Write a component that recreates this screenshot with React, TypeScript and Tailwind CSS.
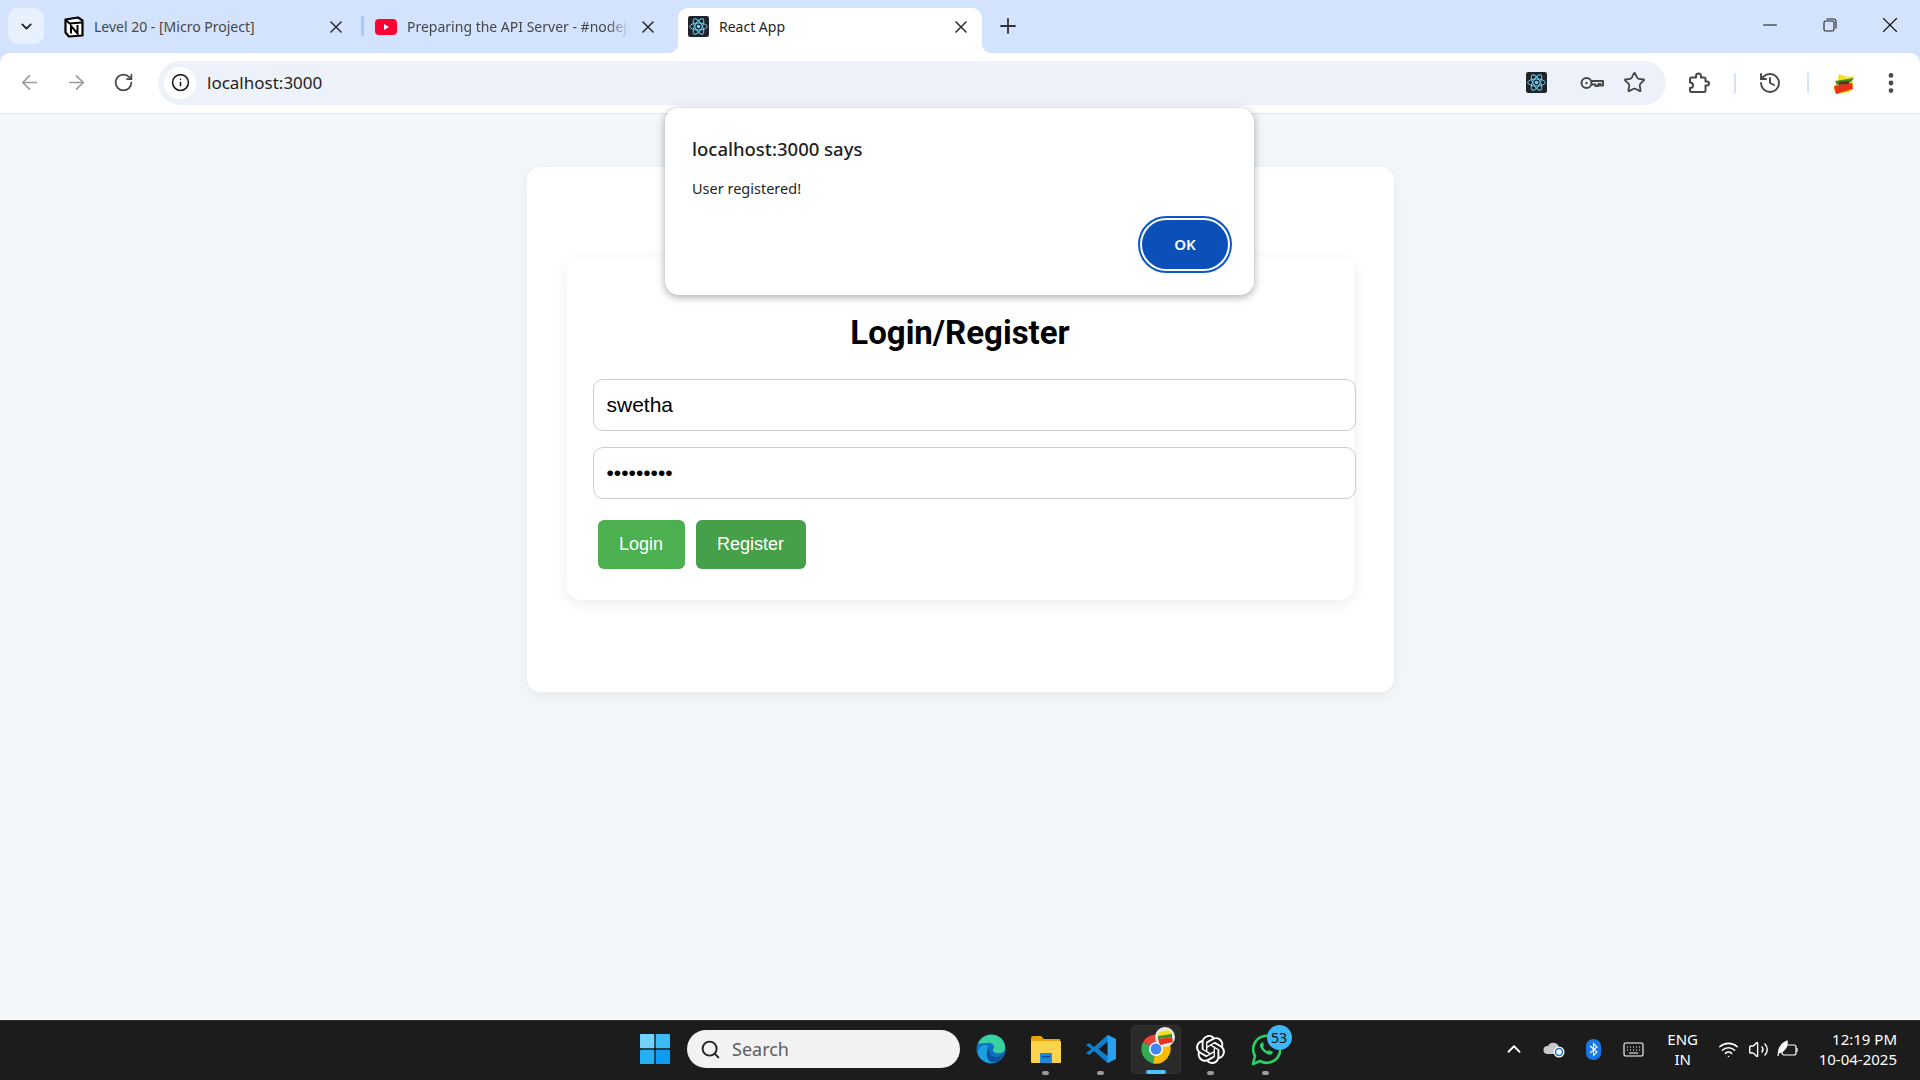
import { ChevronDown, X, Plus, ArrowLeft, ArrowRight, RotateCw, Info, Star, Minus, EllipsisVertical, History, Search, ChevronUp, Wifi, Volume2 } from "lucide-react";
import { SiOpenai } from "react-icons/si";

const uiFont = "font-['Noto_Sans',sans-serif]";

function ReactIcon({ size = 21 }: { size?: number }) {
  return (
    <svg width={size} height={size} viewBox="0 0 24 24" className="shrink-0">
      <rect width="24" height="24" rx="2.500" fill="#20232a" />
      <g fill="none" stroke="#61dafb" strokeWidth="1.100">
        <ellipse cx="12" cy="12" rx="10" ry="4" />
        <ellipse cx="12" cy="12" rx="10" ry="4" transform="rotate(60 12 12)" />
        <ellipse cx="12" cy="12" rx="10" ry="4" transform="rotate(120 12 12)" />
      </g>
      <circle cx="12" cy="12" r="2" fill="#61dafb" />
    </svg>
  );
}

function NotionIcon() {
  return (
    <svg width="20" height="22" viewBox="0 0 20 22" className="shrink-0">
      <path d="M1.500 3.500 14 1.500l4.500 3v15L5 20.500l-3.500-4z" fill="#fff" stroke="#000" strokeWidth="2.200" strokeLinejoin="round" />
      <path d="M2 4l3.500 3.500 12.500-1" fill="none" stroke="#000" strokeWidth="1.800" />
      <path d="M7 17.500V10l6.500 7.500V9" fill="none" stroke="#000" strokeWidth="2" />
    </svg>
  );
}

function YoutubeIcon() {
  return (
    <svg width="22" height="16" viewBox="0 0 22 16" className="shrink-0">
      <rect width="22" height="16" rx="4" fill="#ff0033" />
      <path d="M9 5l5 3-5 3z" fill="#fff" />
    </svg>
  );
}

function Tab({ icon, title, active, fade, className }: { icon: React.ReactNode; title: string; active?: boolean; fade?: boolean; className: string }) {
  return (
    <div className={`relative flex h-[45px] items-center pb-[8px] ${active ? "rounded-t-[10px] bg-white" : ""} ${className}`}>
      {active && <div className="absolute bottom-0 left-[-10px] h-[10px] w-[10px] bg-[radial-gradient(circle_at_0_0,transparent_10px,white_10.500px)]" />}
      {active && <div className="absolute right-[-10px] bottom-0 h-[10px] w-[10px] bg-[radial-gradient(circle_at_100%_0,transparent_10px,white_10.500px)]" />}
      {icon}
      <span className={`ml-[10px] flex-1 overflow-hidden text-[14px] whitespace-nowrap ${active ? "text-[#1f1f1f]" : "text-[#474747]"} ${fade ? "mr-[8px] [mask-image:linear-gradient(to_right,black_90%,transparent)]" : ""}`}>
        {title}
      </span>
      <X size={20} strokeWidth={2} className="shrink-0 text-[#333]" />
    </div>
  );
}

function TabStrip() {
  return (
    <div className="flex h-[53px] items-end bg-[#d3e3fd] pl-[8px] text-sm">
      <div className="mb-[9px] flex h-[36px] w-[36px] items-center justify-center rounded-[10px] bg-[#e9f0fd]">
        <ChevronDown size={17} strokeWidth={2.600} className="text-[#1f1f1f]" />
      </div>
      <div className="ml-[8px] flex items-end">
        <Tab icon={<NotionIcon />} title="Level 20 - [Micro Project]" className="w-[309px] pr-[15px] pl-[12px]" />
        <div className="mb-[17px] h-[20px] w-[3px] bg-[#a8c7fa]" />
        <Tab icon={<YoutubeIcon />} title="Preparing the API Server - #nodejs" fade className="w-[300px] pr-[6px] pl-[11px]" />
        <div className="w-[14px]" />
        <Tab icon={<ReactIcon />} title="React App" active className="w-[304px] pr-[11px] pl-[10px]" />
      </div>
      <div className="mb-[15px] ml-[14px]">
        <Plus size={24} strokeWidth={1.800} className="text-[#333]" />
      </div>
      <div className="mb-[15px] ml-auto flex items-center">
        <div className="flex w-[60px] justify-center"><Minus size={22} strokeWidth={1.100} className="text-[#111]" /></div>
        <div className="flex w-[60px] justify-center">
          <svg width="14" height="14" viewBox="0 0 14 14" fill="none" stroke="#222" strokeWidth="1.100">
            <rect x="1" y="3" width="10" height="10" rx="1.500" />
            <path d="M3.500 1h7A2.500 2.500 0 0 1 13 3.500v7" />
          </svg>
        </div>
        <div className="flex w-[60px] justify-center"><X size={26} strokeWidth={1} className="text-[#111]" /></div>
      </div>
    </div>
  );
}

function KeyIcon() {
  return (
    <svg width="24" height="14" viewBox="0 0 24 14" fill="none" stroke="#474747" strokeWidth="2" className="ml-[33px]">
      <circle cx="6.500" cy="7" r="5" />
      <circle cx="6.500" cy="7" r="1.200" fill="#474747" stroke="none" />
      <path d="M11.500 5H23v4.500h-2.500V8h-2v2h-3V8.500h-4" strokeLinejoin="round" />
    </svg>
  );
}

function ExtensionIcon() {
  return (
    <svg width="22" height="22" viewBox="0 0 22 22" fill="none" stroke="#474747" strokeWidth="2" strokeLinejoin="round" className="ml-[22px]">
      <path d="M2 7a1.500 1.500 0 0 1 1.500-1.500H8V4a2.500 2.500 0 0 1 5 0v1.500h3A1.500 1.500 0 0 1 17.500 7v2.500H19a2 2 0 0 1 0 4h-1.500v5A1.500 1.500 0 0 1 16 20H3.500A1.500 1.500 0 0 1 2 18.500V16c2 0 3-1 3-2.500S4 10.500 2 10.500z" />
    </svg>
  );
}

function Toolbar() {
  return (
    <div className="flex h-[61px] items-center rounded-t-[10px] border-b border-[#e3e5e8] bg-white pb-[1px] text-[#474747]">
      <div className="flex w-[158px] items-center pl-[17px]">
        <div className="flex w-[24px] justify-center"><ArrowLeft size={23} strokeWidth={1.800} className="text-[#9a9c9f]" /></div>
        <div className="ml-[23px] flex w-[24px] justify-center"><ArrowRight size={23} strokeWidth={1.800} className="text-[#9a9c9f]" /></div>
        <div className="ml-[23px] flex w-[24px] justify-center"><RotateCw size={21} strokeWidth={2} /></div>
      </div>
      <div className="flex h-[44px] w-[1508px] items-center rounded-full bg-[#edf2fa] pr-[20px] pl-[6px]">
        <div className="flex h-[32px] w-[32px] items-center justify-center rounded-full bg-white">
          <Info size={19} strokeWidth={2} className="text-[#1f1f1f]" />
        </div>
        <span className="ml-[11px] text-[17px] text-[#1f1f1f]">localhost:3000</span>
        <div className="ml-auto flex items-center">
          <ReactIcon />
          <KeyIcon />
          <Star size={23} strokeWidth={1.900} className="ml-[19px]" />
        </div>
      </div>
      <div className="flex flex-1 items-center">
        <ExtensionIcon />
        <div className="ml-[24px] h-[20px] w-[2px] bg-[#d3e3fd]" />
        <History size={24} strokeWidth={1.900} className="ml-[22px]" />
        <div className="ml-[25px] h-[20px] w-[2px] bg-[#d3e3fd]" />
        <svg width="26" height="24" viewBox="0 0 26 24" className="ml-[22px]">
          <path d="M8 3l9 3 6-1-3 5 3 3-4 8-14 2-3-6 4-5z" fill="#f5e020" />
          <path d="M4 10l19-3-3 4-14 3z" fill="#3a8f2e" />
          <path d="M3 15l18-3 1 6-17 5z" fill="#e8331c" />
          <path d="M8 11l10-1 0 3-10 1z" fill="#6b2b16" />
        </svg>
        <EllipsisVertical size={26} strokeWidth={2.400} className="ml-[21px]" />
      </div>
    </div>
  );
}

function WindowsLogo() {
  return (
    <svg width="30" height="30" viewBox="0 0 30 30">
      <rect x="0" y="0" width="14.300" height="14.300" rx="1" fill="#6fd3fb" />
      <rect x="15.700" y="0" width="14.300" height="14.300" rx="1" fill="#3cbcf9" />
      <rect x="0" y="15.700" width="14.300" height="14.300" rx="1" fill="#25aff5" />
      <rect x="15.700" y="15.700" width="14.300" height="14.300" rx="1" fill="#0e9cf0" />
    </svg>
  );
}

function EdgeIcon() {
  return (
    <svg width="30" height="30" viewBox="0 0 30 30">
      <circle cx="15" cy="15" r="14.500" fill="#0f73c4" />
      <path d="M2 10C5 2 13 0 18 1c7 1 12 7 11 14-1 4-5 5-9 4-3-1-4-3-2-5 1-2-2-6-7-5-4 0-8 1-11 1z" fill="#3ad1a0" />
      <path d="M12 12c-3 5 0 14 8 16-7 3-16-1-18-9 0-5 5-10 10-7z" fill="#1ea0e0" />
      <path d="M14 14c-2 4 1 9 6 9 3 0 6-2 8-5-2 9-10 11-13 10-5-3-6-10-1-14z" fill="#0d4f9e" />
    </svg>
  );
}

function FolderIcon() {
  return (
    <svg width="31" height="28" viewBox="0 0 31 28">
      <path d="M1 3a2 2 0 0 1 2-2h8l3 3h15a1 1 0 0 1 1 1v3H1z" fill="#e5a50a" />
      <rect x="1" y="6" width="30" height="22" rx="1" fill="#fcd34d" />
      <rect x="10" y="18" width="12" height="10" rx="1" fill="#1e88d8" />
      <rect x="12" y="21" width="8" height="1.500" fill="#0b4f94" />
    </svg>
  );
}

function VSCodeIcon() {
  return (
    <svg width="30" height="30" viewBox="0 0 30 30">
      <path d="M21.500 1 30 5v20l-8.500 4L8 17l-5 4-3-2 5.500-4L0 11l3-2 5 4z" fill="#0f7fcb" />
      <path d="M21.500 1 30 5v20l-8.500 4z" fill="#2ba0ee" />
      <path d="M21.500 8 12.500 15l9 7z" fill="#1a1a1a" />
    </svg>
  );
}

function ChromeIcon() {
  return (
    <div className="relative h-[30px] w-[30px]">
      <svg width="30" height="30" viewBox="0 0 30 30">
        <path d="M15 15 2 8A15 15 0 0 1 28 8z" fill="#ea4335" />
        <path d="M15 15 2 8a15 15 0 0 0 10 21.500z" fill="#34a853" />
        <path d="M15 15 28 8a15 15 0 0 1-16 21.500z" fill="#fbbc04" />
        <circle cx="15" cy="15" r="7" fill="#fff" />
        <circle cx="15" cy="15" r="5.500" fill="#4285f4" />
      </svg>
      <svg width="20" height="20" viewBox="0 0 20 20" className="absolute -top-[7px] -right-[4px]">
        <circle cx="10" cy="10" r="10" fill="#e9e9e9" />
        <path d="M4 5l9-2 4 3-1 3-13 2z" fill="#f5e020" />
        <path d="M3 9l14-2 0 3-14 2z" fill="#3a8f2e" />
        <path d="M3 12l14-2 1 5-13 3z" fill="#e8331c" />
      </svg>
    </div>
  );
}

function WhatsappIcon() {
  return (
    <div className="relative h-[30px] w-[30px]">
      <svg width="30" height="32" viewBox="0 0 30 32">
        <path d="M2 30l2-8a13.500 13.500 0 1 1 5 5z" fill="none" stroke="#25d366" strokeWidth="2.600" strokeLinejoin="round" />
        <path d="M10 9c-2 2-1 5 2 8s7 5 9 3l1-2-4-2-1 1c-2 0-4-2-5-4l1-1-1-4z" fill="#25d366" />
      </svg>
      <div className="absolute -top-[9px] -right-[11px] flex h-[25px] w-[25px] items-center justify-center rounded-full bg-[#3db7f5] text-[14px] text-[#111]">53</div>
    </div>
  );
}

function TaskbarItem({ children, dot }: { children: React.ReactNode; dot?: "grey" | "blue" }) {
  return (
    <div className={`relative flex h-[49px] items-center justify-center rounded-[5px] ${dot === "blue" ? "mx-[2.500px] w-[50px] border border-[#333] bg-[#2a2a2a]" : "w-[55px]"}`}>
      {children}
      {dot === "grey" && <div className="absolute bottom-[-1px] h-[4px] w-[7px] rounded-full bg-[#9b9b9b]" />}
      {dot === "blue" && <div className="absolute bottom-[-1px] h-[4px] w-[20px] rounded-full bg-[#4cc2ff]" />}
    </div>
  );
}

function Taskbar() {
  return (
    <div className="flex h-[60px] items-center border-t border-[#2e2e2e] bg-[#1c1c1c] pb-[3px] pl-[640px] text-white">
      <WindowsLogo />
      <div className="ml-[17px] flex h-[38px] w-[273px] items-center rounded-full bg-[#f2f2f2] pl-[13px] text-[#5c5c5c]">
        <Search size={21} strokeWidth={2.200} className="text-[#222]" />
        <span className="ml-[11px] text-[18px]">Search</span>
      </div>
      <div className="ml-[3px] flex items-center">
        <TaskbarItem><EdgeIcon /></TaskbarItem>
        <TaskbarItem dot="grey"><FolderIcon /></TaskbarItem>
        <TaskbarItem dot="grey"><VSCodeIcon /></TaskbarItem>
        <TaskbarItem dot="blue"><ChromeIcon /></TaskbarItem>
        <TaskbarItem dot="grey"><SiOpenai size={29} color="#fff" /></TaskbarItem>
        <TaskbarItem dot="grey"><WhatsappIcon /></TaskbarItem>
      </div>
      <div className="ml-auto flex items-center pr-[23px]">
        <ChevronUp size={22} strokeWidth={2} />
        <svg width="22" height="18" viewBox="0 0 22 18" className="ml-[18px]">
          <path d="M4 14a4 4 0 0 1 1-8 6 6 0 0 1 11 1 3 3 0 0 1 0 7z" fill="#c9c9c9" />
          <circle cx="16" cy="12" r="5.500" fill="#fff" />
          <circle cx="16" cy="12" r="3.500" fill="none" stroke="#1a73c8" strokeWidth="1.500" />
        </svg>
        <div className="ml-[21px] flex h-[21px] w-[15px] items-center justify-center rounded-[7px] bg-[#1478e6]">
          <svg width="9" height="15" viewBox="0 0 9 15" fill="none" stroke="#fff" strokeWidth="1.100">
            <path d="M1 4l7 6-3.500 3.500v-12L8 5 1 11" />
          </svg>
        </div>
        <svg width="21" height="15" viewBox="0 0 21 15" fill="none" stroke="#fff" strokeWidth="1.100" className="ml-[22px]">
          <rect x="1" y="1" width="19" height="13" rx="1.500" />
          <path d="M4 5h1m2 0h1m2 0h1m2 0h1m2 0h1M4 8h1m2 0h1m2 0h1m2 0h1m2 0h1M6 11h9" />
        </svg>
        <div className="ml-[23px] w-[32px] text-center text-[15px] leading-[20px]">
          <div>ENG</div>
          <div>IN</div>
        </div>
        <Wifi size={21} strokeWidth={1.800} className="ml-[19px]" />
        <Volume2 size={21} strokeWidth={1.600} className="ml-[9px]" />
        <svg width="22" height="18" viewBox="0 0 22 18" fill="none" stroke="#fff" strokeWidth="1.200" className="ml-[8px]">
          <rect x="5" y="5" width="14" height="10" rx="2" />
          <path d="M20 8v4" />
          <path d="M1 16C1 8 5 3 10 1c1 5-2 10-8 12" fill="#fff" />
        </svg>
        <div className="ml-[20px] text-right text-[15px] leading-[20px]">
          <div>12:19 PM</div>
          <div>10-04-2025</div>
        </div>
      </div>
    </div>
  );
}

function AlertDialog() {
  return (
    <div className={`${uiFont} absolute top-[108px] left-[665px] h-[187px] w-[589px] rounded-[14px] bg-white pr-[22px] pl-[27px] shadow-[0_2px_8px_rgba(0,0,0,0.35)]`}>
      <div className="pt-[26px] text-[18.500px] leading-[30px] font-medium text-[#1f1f1f]">localhost:3000 says</div>
      <div className="mt-[14px] text-[14.500px] leading-[20px] text-[#1f1f1f]">User registered!</div>
      <div className="mt-[18px] flex justify-end">
        <button className="h-[57px] w-[94px] rounded-full border-[2px] border-[#0b57d0] p-[2px]">
          <span className="flex h-full w-full items-center justify-center rounded-full bg-[#0b50b8] text-[15px] font-semibold text-white">OK</span>
        </button>
      </div>
    </div>
  );
}

export default function App() {
  return (
    <div className={`${uiFont} relative flex h-[1080px] w-[1920px] flex-col overflow-hidden bg-[#d3e3fd]`}>
      <TabStrip />
      <Toolbar />
      <div className="flex flex-1 justify-center bg-[#f4f7fa] pt-[53px]">
        <div className="h-[525px] w-[867px] rounded-[14px] bg-white px-[41px] pt-[90px] shadow-[0_4px_16px_rgba(0,0,0,0.06)]">
          <div className="h-[343px] w-[787px] -translate-x-px rounded-[14px] bg-white px-[26px] shadow-[0_4px_16px_rgba(0,0,0,0.08)]">
            <h1 className="pt-[53px] text-center font-['Roboto',sans-serif] text-[33px] leading-[46px] font-bold text-black">Login/Register</h1>
            <div className="mt-[23px] flex flex-col gap-[16px] font-['Liberation_Sans',sans-serif]">
              <input readOnly value="swetha" className="h-[52px] w-[763px] rounded-[10px] border border-[#ccc] bg-white px-[13px] text-[21px] text-black outline-none" />
              <input readOnly type="password" value="password1" className="h-[52px] w-[763px] rounded-[10px] border border-[#ccc] bg-white px-[13px] text-[21px] text-black outline-none" />
            </div>
            <div className="mt-[21px] flex gap-[11px] pl-[5px] font-['Liberation_Sans',sans-serif]">
              <button className="h-[49px] w-[87px] rounded-[6px] bg-[#4caf50] text-[18px] text-white">Login</button>
              <button className="h-[49px] w-[110px] rounded-[6px] bg-[#45a049] text-[18px] text-white">Register</button>
            </div>
          </div>
        </div>
      </div>
      <Taskbar />
      <AlertDialog />
    </div>
  );
}
